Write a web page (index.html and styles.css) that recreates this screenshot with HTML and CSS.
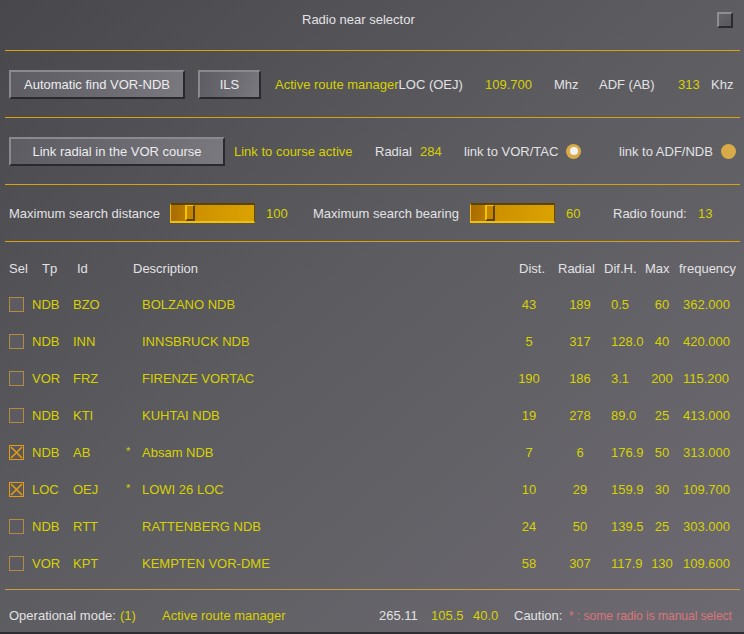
FILE: index.html
```html
<!DOCTYPE html>
<html lang="en">
<head>
<meta charset="utf-8">
<title>Radio near selector</title>
<link rel="stylesheet" href="styles.css">
</head>
<body>
<div class="dialog">
  <div class="titlebar">
    <span class="title">Radio near selector</span>
    <span class="close"></span>
  </div>
  <div class="rule"></div>

  <div class="row row-a">
    <button class="btn btn-auto">Automatic find VOR-NDB</button>
    <button class="btn btn-ils">ILS</button>
    <span class="w-arm"><span class="y">Active route manager</span>LOC (OEJ)</span>
    <span class="y w-freq">109.700</span>
    <span class="w-mhz">Mhz</span>
    <span class="w-adf">ADF (AB)</span>
    <span class="y w-khzv">313</span>
    <span>Khz</span>
  </div>
  <div class="rule"></div>

  <div class="row row-b">
    <button class="btn btn-link">Link radial in the VOR course</button>
    <span class="y w-lca">Link to course active</span>
    <span class="w-rad">Radial</span>
    <span class="y w-radv">284</span>
    <span class="w-lnk">link to VOR/TAC</span>
    <span class="radio on"></span>
    <span class="w-sp"></span>
    <span class="w-lnk">link to ADF/NDB</span>
    <span class="radio"></span>
  </div>
  <div class="rule"></div>

  <div class="row row-c">
    <span class="w-msd">Maximum search distance</span>
    <span class="slider"><span class="track-l"></span><span class="thumb"></span></span>
    <span class="y w-sv">100</span>
    <span class="w-msb">Maximum search bearing</span>
    <span class="slider"><span class="track-l s2"></span><span class="thumb"></span></span>
    <span class="y w-sv">60</span>
    <span class="w-rf">Radio found:</span>
    <span class="y">13</span>
  </div>
  <div class="rule"></div>

  <div class="table">
    <div class="thead">
      <span>Sel</span><span>Tp</span><span>Id</span><span>Description</span><span>Dist.</span><span>Radial</span><span>Dif.H.</span><span>Max</span><span>frequency</span>
    </div>

    <div class="tr">
      <span class="cb"></span><span>NDB</span><span>BZO</span><span class="star"></span><span>BOLZANO NDB</span>
      <span class="c">43</span><span class="c">189</span><span>0.5</span><span class="c">60</span><span class="f">362.000</span>
    </div>
    <div class="tr">
      <span class="cb"></span><span>NDB</span><span>INN</span><span class="star"></span><span>INNSBRUCK NDB</span>
      <span class="c">5</span><span class="c">317</span><span>128.0</span><span class="c">40</span><span class="f">420.000</span>
    </div>
    <div class="tr">
      <span class="cb"></span><span>VOR</span><span>FRZ</span><span class="star"></span><span>FIRENZE VORTAC</span>
      <span class="c">190</span><span class="c">186</span><span>3.1</span><span class="c">200</span><span class="f">115.200</span>
    </div>
    <div class="tr">
      <span class="cb"></span><span>NDB</span><span>KTI</span><span class="star"></span><span>KUHTAI NDB</span>
      <span class="c">19</span><span class="c">278</span><span>89.0</span><span class="c">25</span><span class="f">413.000</span>
    </div>
    <div class="tr">
      <span class="cb checked"><svg viewBox="0 0 15 15" width="15" height="15"><path d="M2 2 L13 13 M13 2 L2 13" stroke="#e39c12" stroke-width="1.6" fill="none"/></svg></span><span>NDB</span><span>AB</span><span class="star">*</span><span>Absam NDB</span>
      <span class="c">7</span><span class="c">6</span><span>176.9</span><span class="c">50</span><span class="f">313.000</span>
    </div>
    <div class="tr">
      <span class="cb checked"><svg viewBox="0 0 15 15" width="15" height="15"><path d="M2 2 L13 13 M13 2 L2 13" stroke="#e39c12" stroke-width="1.6" fill="none"/></svg></span><span>LOC</span><span>OEJ</span><span class="star">*</span><span>LOWI 26 LOC</span>
      <span class="c">10</span><span class="c">29</span><span>159.9</span><span class="c">30</span><span class="f">109.700</span>
    </div>
    <div class="tr">
      <span class="cb"></span><span>NDB</span><span>RTT</span><span class="star"></span><span>RATTENBERG NDB</span>
      <span class="c">24</span><span class="c">50</span><span>139.5</span><span class="c">25</span><span class="f">303.000</span>
    </div>
    <div class="tr">
      <span class="cb"></span><span>VOR</span><span>KPT</span><span class="star"></span><span>KEMPTEN VOR-DME</span>
      <span class="c">58</span><span class="c">307</span><span>117.9</span><span class="c">130</span><span class="f">109.600</span>
    </div>
  </div>
  <div class="rule rule-last"></div>

  <div class="footer">
    <span class="w-om">Operational mode:</span>
    <span class="y w-m1">(1)</span>
    <span class="y w-arm2">Active route manager</span>
    <span class="w-v1">265.11</span>
    <span class="y w-v2">105.5</span>
    <span class="y w-v3">40.0</span>
    <span class="w-cau">Caution:</span>
    <span class="warn">* : some radio is manual select</span>
  </div>
  <div class="bottom-edge"></div>
</div>
</body>
</html>
```

FILE: styles.css
```css
html, body {
  margin: 0;
  padding: 0;
}
body {
  width: 744px;
  height: 634px;
  overflow: hidden;
  font-family: "Liberation Sans", Arial, sans-serif;
  font-size: 13px;
  color: #e2e2e4;
}
.dialog {
  width: 744px;
  height: 634px;
  display: flex;
  flex-direction: column;
  background: linear-gradient(to bottom right, #48474c 0%, #5c5b60 45%, #6d6b71 100%);
}
.y { color: #d6d200; }

.titlebar {
  height: 50px;
  display: flex;
  align-items: flex-start;
  padding-top: 12px;
  box-sizing: border-box;
}
.title {
  margin-left: 302px;
  line-height: 16px;
  flex: 1;
}
.close {
  width: 16px;
  height: 16px;
  box-sizing: border-box;
  margin-right: 11px;
  background: linear-gradient(135deg, #646368, #58575c);
  border-top: 2px solid #8e8d93;
  border-left: 2px solid #8e8d93;
  border-right: 2px solid #2c2b30;
  border-bottom: 2px solid #2c2b30;
}

.rule {
  height: 1px;
  margin: 0 4px 0 5px;
  background: #dba10a;
  flex: none;
}
.rule-last {
  margin-top: 7px;
  background: #c99e3c;
}

.row {
  display: flex;
  align-items: center;
  padding-left: 9px;
  white-space: nowrap;
  flex: none;
}
.row-a, .row-b { height: 66px; }
.row-c { height: 56px; }

.btn {
  font-family: inherit;
  font-size: 13px;
  color: #ececee;
  height: 29px;
  padding: 0;
  box-sizing: border-box;
  background: linear-gradient(110deg, #5d5c62 0%, #6a696f 50%, #7a797f 100%);
  border-top: 2px solid #8a898f;
  border-left: 2px solid #8a898f;
  border-right: 2px solid #2a292e;
  border-bottom: 2px solid #2a292e;
  flex: none;
}
.btn-auto { width: 176px; }
.btn-ils { width: 63px; margin-left: 13px; }
.btn-link { width: 216px; }

.w-arm { margin-left: 14px; width: 210px; }
.w-freq { width: 69px; }
.w-mhz { width: 45px; }
.w-adf { width: 79px; }
.w-khzv { width: 33px; }

.w-lca { margin-left: 9px; width: 141px; }
.w-rad { width: 45px; }
.w-radv { width: 44px; }
.w-lnk { width: 102px; }
.w-sp { width: 38px; }
.radio {
  width: 15px;
  height: 15px;
  border-radius: 50%;
  background: #d8aa48;
  display: flex;
  align-items: center;
  justify-content: center;
  flex: none;
}
.radio.on::after {
  content: "";
  width: 8px;
  height: 8px;
  border-radius: 50%;
  background: #f2f2f2;
}

.w-msd { width: 161px; }
.w-sv { margin-left: 11px; width: 47px; }
.w-msb { width: 157px; }
.w-rf { width: 85px; }
.slider {
  width: 85px;
  height: 20px;
  box-sizing: border-box;
  display: flex;
  align-items: stretch;
  background: linear-gradient(to right, #c88800, #dba300);
  border-top: 2px solid #5e4300;
  border-left: 1px solid #f0c000;
  border-right: 1px solid #6a4a00;
  border-bottom: 2px solid #f2c200;
  flex: none;
}
.track-l {
  width: 14px;
  background: linear-gradient(to right, #a86c00, #b87a00);
}
.thumb {
  width: 10px;
  box-sizing: border-box;
  background: #c48600;
  border-left: 2px solid #f4c400;
  border-top: 1px solid #f4c400;
  border-right: 2px solid #5e4300;
  border-bottom: 2px solid #5e4300;
}

.table {
  margin-top: 8px;
  flex: none;
}
.thead {
  display: grid;
  grid-template-columns: 33px 35px 56px 386px 39px 46px 41px 34px 1fr;
  padding-left: 9px;
  height: 36px;
  align-items: center;
  white-space: nowrap;
}
.tr {
  display: grid;
  grid-template-columns: 23px 41px 53px 16px 367px 40px 62px 31px 40px 1fr;
  padding-left: 9px;
  height: 37px;
  align-items: center;
  color: #d6d200;
  white-space: nowrap;
}
.tr .c { text-align: center; }
.tr .f { padding-left: 1px; }
.star { font-size: 11px; position: relative; top: -2px; color: #d6d200; }
.cb {
  width: 15px;
  height: 15px;
  box-sizing: border-box;
  border: 1px solid #b48a42;
  background: #5c5b61;
  display: block;
  position: relative;
}
.cb.checked {
  border-color: #e39c12;
  background: transparent;
}
.cb svg {
  position: absolute;
  left: -1px;
  top: -1px;
}

.footer {
  display: flex;
  align-items: flex-start;
  padding-left: 9px;
  padding-top: 18px;
  height: 42px;
  box-sizing: border-box;
  line-height: 16px;
  white-space: nowrap;
  flex: none;
}
.w-om { width: 111px; }
.w-m1 { width: 42px; }
.w-arm2 { width: 217px; }
.w-v1 { width: 52px; }
.w-v2 { width: 42px; }
.w-v3 { width: 41px; }
.w-cau { width: 55px; }
.warn {
  color: #d8767a;
  font-size: 12.2px;
  letter-spacing: -0.1px;
}
.bottom-edge {
  flex: 1;
  background: #2e2d32;
}
```
